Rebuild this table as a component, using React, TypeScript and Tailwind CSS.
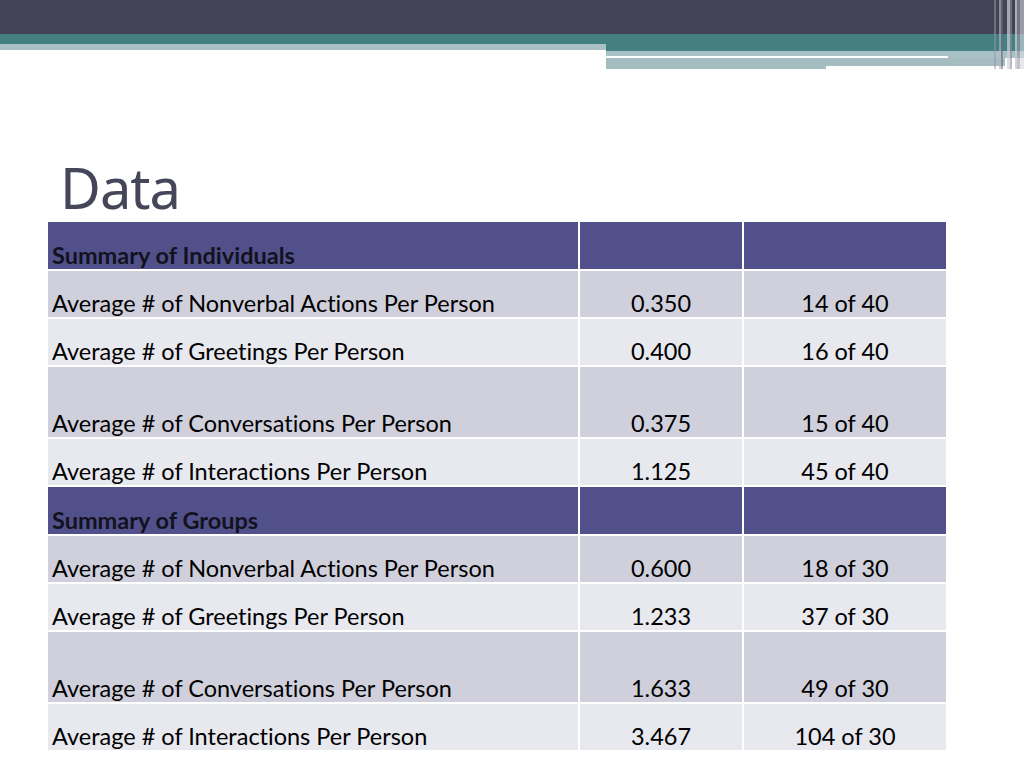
import React from 'react'

type Row = { label: string; value?: string; count?: string; head?: boolean; tall?: boolean; dark?: boolean }

const rows: Row[] = [
  { label: 'Summary of Individuals', head: true },
  { label: 'Average # of Nonverbal Actions Per Person', value: '0.350', count: '14 of 40', dark: true },
  { label: 'Average # of Greetings Per Person', value: '0.400', count: '16 of 40' },
  { label: 'Average # of Conversations Per Person', value: '0.375', count: '15 of 40', dark: true, tall: true },
  { label: 'Average # of Interactions Per Person', value: '1.125', count: '45 of 40' },
  { label: 'Summary of Groups', head: true },
  { label: 'Average # of Nonverbal Actions Per Person', value: '0.600', count: '18 of 30', dark: true },
  { label: 'Average # of Greetings Per Person', value: '1.233', count: '37 of 30' },
  { label: 'Average # of Conversations Per Person', value: '1.633', count: '49 of 30', dark: true, tall: true },
  { label: 'Average # of Interactions Per Person', value: '3.467', count: '104 of 30' },
]

function Banner() {
  return (
    <div className="relative h-[69px]">
      <div className="h-[34px] bg-[#434356]" />
      <div className="flex">
        <div className="w-[606px]">
          <div className="h-[10px] bg-[#43807f]" />
          <div className="h-[6px] bg-[#a9c1c4]" />
        </div>
        <div className="flex-1">
          <div className="h-[17px] bg-[#43807f]" />
          <div className="h-[5px] bg-[#a9c1c4]" />
          <div className="flex h-[2px]">
            <div className="w-[342px] bg-white" />
            <div className="flex-1 bg-[#a9c1c4]" />
          </div>
          <div className="h-[8px] w-[399px] bg-[#a5bdc0]" />
          <div className="h-[3px] w-[220px] bg-[#a5bdc0]" />
        </div>
      </div>
      {/* vertical hairlines at the right edge */}
      <div className="absolute right-0 top-0 flex h-[69px] w-[30px]">
        <div className="w-[2px] bg-[#9a9aa8] opacity-50" />
        <div className="w-[3px]" />
        <div className="w-[2px] bg-[#b8b8c4] opacity-60" />
        <div className="w-[2px] bg-[#6c6c80] opacity-60" />
        <div className="w-[4px]" />
        <div className="w-[3px] bg-[#d0d0d8] opacity-70" />
        <div className="w-[2px] bg-[#8a8a9a] opacity-60" />
        <div className="w-[3px]" />
        <div className="w-[2px] bg-[#c8c8d2] opacity-80" />
        <div className="w-[3px] bg-[#9a9aaa] opacity-60" />
        <div className="w-[4px] bg-[#d8d8e0] opacity-60" />
      </div>
    </div>
  )
}

export default function App() {
  return (
    <div
      className="h-[768px] w-[1024px] overflow-hidden bg-white"
      style={{ fontFamily: 'Lato, "Open Sans", sans-serif', fontVariantLigatures: 'none' }}
    >
      <Banner />
      <h1
        className="ml-[60px] mt-[84px] h-[69px] text-[56px] leading-[69px] tracking-[-1px] text-[#45465a]"
        style={{ fontFamily: '"Noto Sans", sans-serif' }}
      >
        Data
      </h1>
      <div className="ml-[48px] w-[898px]">
        {rows.map((r, i) => {
          const bg = r.head ? 'bg-[#52508a]' : r.dark ? 'bg-[#d0d0dc]' : 'bg-[#e8e8ef]'
          const h = r.tall ? 'h-[70px]' : r.head ? 'h-[47px]' : 'h-[46px]'
          return (
            <div key={i} className={`flex gap-[2px] ${i > 0 ? 'mt-[2px]' : ''}`}>
              <div className={`${bg} ${h} flex w-[530px] items-end pb-[1px] pl-[4px] text-[23.5px] leading-[26px] ${r.head ? 'font-bold text-[#12121e]' : 'text-black'}`}>
                {r.label}
              </div>
              <div className={`${bg} ${h} flex w-[162px] items-end justify-center pb-[1px] text-[23.5px] leading-[26px] text-black`}>
                {r.value}
              </div>
              <div className={`${bg} ${h} flex flex-1 items-end justify-center pb-[1px] text-[23.5px] leading-[26px] text-black`}>
                {r.count}
              </div>
            </div>
          )
        })}
      </div>
    </div>
  )
}
